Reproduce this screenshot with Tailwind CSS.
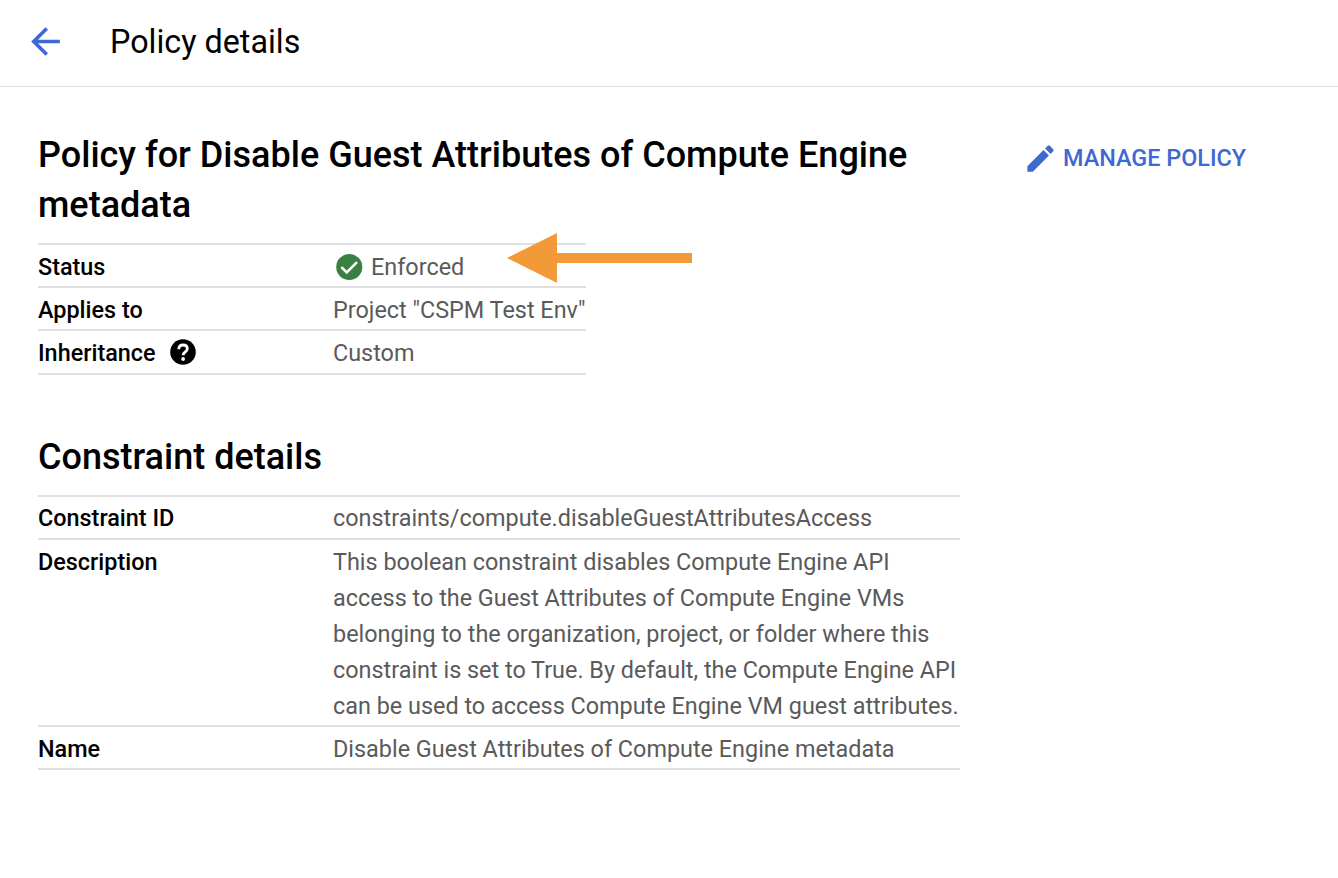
<!DOCTYPE html>
<html lang="en"><head><meta charset="utf-8"><title>Policy details</title>
<script src="https://cdn.jsdelivr.net/npm/@tailwindcss/browser@4"></script></head>
<body class="bg-white font-['Roboto',sans-serif] text-black w-[1338px] h-[878px] overflow-hidden">
<header class="h-[87px] border-b border-[#e0e0e0] flex items-center pl-[24px] pb-1">
<svg class="w-[43px] h-[43px]" viewBox="0 0 24 24" fill="#3f69d2"><path d="M20 11H7.83l5.59-5.59L12 4l-8 8 8 8 1.41-1.41L7.83 13H20v-2z"/></svg>
<h1 class="ml-[43px] pt-[2px] text-[32.3px] leading-[40px] whitespace-nowrap">Policy details</h1>
</header>
<main class="flex pl-[38px] pt-[43px]">
<div class="w-[922px]">
<h2 class="text-[36px] leading-[50px] font-medium whitespace-nowrap tracking-[0.01px]">Policy for Disable Guest Attributes of Compute Engine<br>metadata</h2>
<div class="relative mt-[13px] w-[548px] text-[23.4px] leading-[36px]">
<dl class="border-t-2 border-[#e0e0e0]">
<div class="flex h-[43px] pt-[4px] border-b-2 border-[#e0e0e0]"><dt class="w-[295px] font-medium">Status</dt><dd class="flex h-[36px] items-center text-[#5a5a5a]"><svg class="w-[32px] h-[32px] mr-[6px] mb-[1px]" viewBox="0 0 24 24"><circle cx="12.2" cy="12" r="9.8" fill="#3b8043"/><path d="M6.3 12.1l4 4 7.7-7.8" fill="none" stroke="#fff" stroke-width="1.9"/></svg>Enforced</dd></div>
<div class="flex h-[43px] pt-[4px] border-b-2 border-[#e0e0e0]"><dt class="w-[295px] font-medium">Applies to</dt><dd class="text-[#5a5a5a] whitespace-nowrap">Project "CSPM Test Env"</dd></div>
<div class="flex h-[44px] pt-[4px] border-b-2 border-[#e0e0e0]"><dt class="w-[295px] h-[36px] font-medium flex items-center">Inheritance<svg class="w-[26px] h-[26px] ml-[14px] mb-[2px]" viewBox="0 0 26 26"><circle cx="13" cy="13" r="12.8"/><path d="M8.8 10.2C8.800 7.500 10.500 6 13 6s4.300 1.500 4.300 3.800c0 3-4.200 3.200-4.200 6.400" fill="none" stroke="#fff" stroke-width="2.8"/><circle cx="13.100" cy="20" r="1.9" fill="#fff"/></svg></dt><dd class="text-[#5a5a5a]">Custom</dd></div>
</dl>
<svg class="absolute left-[469px] top-[-10px] w-[185px] h-[50px]" viewBox="0 0 185 50" fill="#f39a38"><path d="M0 25L50 0V20H185V30H50V50z"/></svg>
</div>
<h2 class="mt-[57px] text-[36px] leading-[50px] font-medium">Constraint details</h2>
<dl class="mt-[13px] border-t-2 border-[#e0e0e0] text-[23.4px] leading-[36px]">
<div class="flex h-[43px] pt-[3px] border-b-2 border-[#e0e0e0]"><dt class="w-[295px] font-medium">Constraint ID</dt><dd class="text-[#5a5a5a]">constraints/compute.disableGuestAttributesAccess</dd></div>
<div class="flex h-[187px] pt-[4px] border-b-2 border-[#e0e0e0]"><dt class="w-[295px] font-medium">Description</dt><dd class="text-[#5a5a5a] whitespace-nowrap">This boolean constraint disables Compute Engine API<br>access to the Guest Attributes of Compute Engine VMs<br>belonging to the organization, project, or folder where this<br>constraint is set to True. By default, the Compute Engine API<br>can be used to access Compute Engine VM guest attributes.</dd></div>
<div class="flex h-[43px] pt-[4px] border-b-2 border-[#e0e0e0]"><dt class="w-[295px] font-medium">Name</dt><dd class="text-[#5a5a5a]">Disable Guest Attributes of Compute Engine metadata</dd></div>
</dl>
</div>
<button class="ml-[63px] mt-[10px] h-[36px] flex items-center text-[23.4px] font-medium text-[#3f69d2] whitespace-nowrap"><svg class="w-[35px] h-[35px] mr-[5px]" viewBox="0 0 24 24" fill="currentColor"><path d="M3 17.25V21h3.75L17.81 9.94l-3.75-3.75L3 17.25zM20.71 7.04a.996.996 0 0 0 0-1.41l-2.34-2.34a.996.996 0 0 0-1.41 0l-1.83 1.83 3.75 3.75 1.83-1.83z"/></svg><span class="pt-[2px]">MANAGE POLICY</span></button>
</main>
</body></html>
